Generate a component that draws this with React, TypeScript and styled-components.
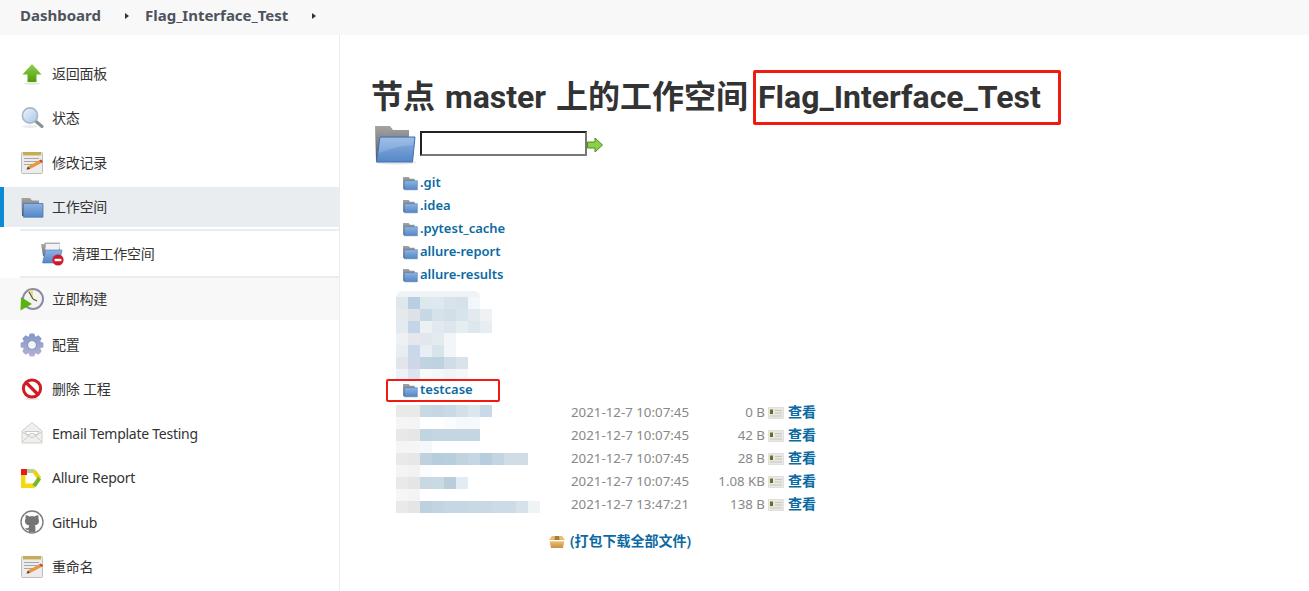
import React from "react";
import styled, { createGlobalStyle } from "styled-components";

const FONT = `"Noto Sans", "Noto Sans CJK SC", sans-serif`;

const GlobalStyle = createGlobalStyle`
  html, body {
    margin: 0;
    padding: 0;
    background: #fff;
    font-family: ${FONT};
    color: #333;
  }
  * { box-sizing: border-box; }
`;

const gearPath = (() => {
  const teeth = 8;
  const pts: string[] = [];
  for (let i = 0; i < teeth; i++) {
    const a = (i / teeth) * Math.PI * 2;
    const w = Math.PI / teeth;
    [
      [9, -w * 0.95],
      [11.6, -w * 0.5],
      [11.6, w * 0.5],
      [9, w * 0.95]
    ].forEach(([r, d]) => {
      pts.push(`${(12 + r * Math.cos(a + d)).toFixed(2)} ${(12 + r * Math.sin(a + d)).toFixed(2)}`);
    });
  }
  return `M${pts.join("L")}Z`;
})();

const Defs = () => (
  <HiddenSvg aria-hidden="true">
    <defs>
      <linearGradient id="folderFront" x1="0" y1="0" x2="0" y2="1">
        <stop offset="0" stopColor="#8db3e2" />
        <stop offset="1" stopColor="#5586c6" />
      </linearGradient>
      <linearGradient id="folderBack" x1="0" y1="0" x2="0" y2="1">
        <stop offset="0" stopColor="#a5a5a5" />
        <stop offset="1" stopColor="#555" />
      </linearGradient>
      <linearGradient id="greenUp" x1="0" y1="0" x2="0" y2="1">
        <stop offset="0" stopColor="#93cf4e" />
        <stop offset="1" stopColor="#4f9d0b" />
      </linearGradient>
      <linearGradient id="lens" x1="0" y1="0" x2="1" y2="1">
        <stop offset="0" stopColor="#eef5fc" />
        <stop offset="1" stopColor="#a8c6e8" />
      </linearGradient>
      <linearGradient id="gear" x1="0" y1="0" x2="0" y2="1">
        <stop offset="0" stopColor="#8199c4" />
        <stop offset="1" stopColor="#b4b0d6" />
      </linearGradient>
      <linearGradient id="box" x1="0" y1="0" x2="0" y2="1">
        <stop offset="0" stopColor="#eec27a" />
        <stop offset="1" stopColor="#c98f3c" />
      </linearGradient>
    </defs>
  </HiddenSvg>
);

type IconProps = { size?: number };

const UpIcon = ({ size = 24 }: IconProps) => (
  <svg width={size} height={size} viewBox="0 0 24 24">
    <ellipse cx="12" cy="21.5" rx="9" ry="1.2" fill="#e4e4e4" />
    <path d="M12 2 L21.5 12.5 H16.5 V20 H7.5 V12.5 H2.5 Z" fill="url(#greenUp)" />
  </svg>
);

const SearchIcon = ({ size = 24 }: IconProps) => (
  <svg width={size} height={size} viewBox="0 0 24 24">
    <ellipse cx="10" cy="20.5" rx="8" ry="1.4" fill="#ececec" />
    <line x1="15.5" y1="15" x2="22" y2="20.5" stroke="#8b8f94" strokeWidth="3" strokeLinecap="round" />
    <circle cx="10" cy="9.5" r="7.6" fill="url(#lens)" stroke="#a9b8c8" strokeWidth="1.6" />
  </svg>
);

const NotepadIcon = ({ size = 24 }: IconProps) => (
  <svg width={size} height={size} viewBox="0 0 24 24">
    <rect x="1.5" y="1.5" width="21" height="21" rx="1" fill="#ececec" stroke="#bdbdbd" />
    <rect x="3" y="1" width="18" height="3.4" fill="#c4ad55" />
    <path d="M4 7.5H19M4 10.5H19M4 13.5H13" stroke="#a8a8a8" strokeWidth="1" />
    <path d="M6.5 18.5 L8 15.5 L19 9.5 L21.5 12 L10 18 Z" fill="#e8973a" />
    <path d="M19 9.5 L21.5 12 L23 10.6 L21 8.4 Z" fill="#c8442e" />
    <path d="M6.5 18.5 L8 15.5 L10 18 Z" fill="#5a4330" />
  </svg>
);

const FolderIcon = ({ size = 24 }: IconProps) => (
  <svg width={size} height={size} viewBox="0 0 24 24">
    <path d="M1.5 3 H10 L12 5.5 H19 V21 H2 Z" fill="url(#folderBack)" />
    <path d="M3.4 8.5 H23 V22.2 H3.4 Z" fill="url(#folderFront)" stroke="#4a78b8" strokeWidth="0.8" />
  </svg>
);

const BigFolderIcon = () => (
  <svg width="44" height="40" viewBox="0 0 44 40">
    <ellipse cx="22" cy="37.5" rx="20" ry="2" fill="#e6e6e6" />
    <path d="M1 1 H16 L19 5 H35 V36 H2 Z" fill="url(#folderBack)" />
    <path d="M6 12 H41 L38.5 37 H2.5 Z" fill="url(#folderFront)" stroke="#3f70b4" strokeWidth="1" />
    <path d="M6 13 H40 L39.2 20 C28 20 16 24 4.6 28 Z" fill="#fff" opacity="0.16" />
  </svg>
);

const CleanIcon = ({ size = 24 }: IconProps) => (
  <svg width={size} height={size} viewBox="0 0 24 24">
    <path d="M1 2 H4 L5 0.5 H20 V14 H3 Z" fill="url(#folderBack)" opacity="0.85" />
    <path d="M6 2 H20 L19 10 H5 Z" fill="#f2f2f2" />
    <path d="M5.5 8 H22 L19.5 21 H2.5 Z" fill="url(#folderFront)" stroke="#4a78b8" strokeWidth="0.6" />
    <circle cx="18" cy="18" r="5.6" fill="#cf1b28" />
    <rect x="14.6" y="16.8" width="6.8" height="2.4" fill="#fff" />
  </svg>
);

const BuildIcon = ({ size = 24 }: IconProps) => (
  <svg width={size} height={size} viewBox="0 0 24 24">
    <circle cx="13" cy="12" r="10" fill="#f4f4ee" stroke="#8e8aa8" strokeWidth="2" />
    <path d="M13 12 L8 4 A10 10 0 0 1 13 3 Z" fill="#ecdc7a" />
    <path d="M13 12 L9 5 M13 12 L17 14" stroke="#555" strokeWidth="1.2" />
    <path d="M1 10 L12 17 L0.5 23.5 Z" fill="#5bb312" />
  </svg>
);

const GearIcon = ({ size = 24 }: IconProps) => (
  <svg width={size} height={size} viewBox="0 0 24 24">
    <path d={gearPath} fill="url(#gear)" />
    <circle cx="12" cy="12" r="4.4" fill="#f3f4f9" stroke="#6f86b5" strokeWidth="0.8" />
  </svg>
);

const DeleteIcon = ({ size = 24 }: IconProps) => (
  <svg width={size} height={size} viewBox="0 0 24 24">
    <ellipse cx="12" cy="22" rx="8" ry="1.2" fill="#e6e6e6" />
    <circle cx="12" cy="11.5" r="8.6" fill="#fff" stroke="#d01c22" strokeWidth="3" />
    <line x1="6" y1="5.5" x2="18" y2="17.5" stroke="#d01c22" strokeWidth="3.2" />
  </svg>
);

const MailIcon = ({ size = 24 }: IconProps) => (
  <svg width={size} height={size} viewBox="0 0 24 24">
    <path d="M2 10 L12 1.5 L22 10 V22 H2 Z" fill="#f0f0ee" stroke="#cfcfcb" />
    <path d="M5 10.5 H19 L17 14 L12 12.5 L7 14 Z" fill="#fff" stroke="#bdbdb8" strokeWidth="0.8" />
    <path d="M2 21 L9 14.5 M22 21 L15 14.5 M2.4 11 L12 17 L21.6 11" fill="none" stroke="#c6c6c2" strokeWidth="0.9" />
  </svg>
);

const AllureIcon = ({ size = 24 }: IconProps) => (
  <svg width={size} height={size} viewBox="0 0 24 24">
    <path d="M3.2 5 V19.8 H14.5" fill="none" stroke="#f4d90f" strokeWidth="4.4" />
    <path d="M1 3 H7 V9 H1 Z" fill="#e31b1b" />
    <path d="M7 5 H14.5" fill="none" stroke="#a9d69a" strokeWidth="4" />
    <path d="M14 5 L19.5 12.5" fill="none" stroke="#f2cc1d" strokeWidth="4" />
    <path d="M19.5 12 L14 20" fill="none" stroke="#76b82a" strokeWidth="4" />
  </svg>
);

const GithubIcon = ({ size = 24 }: IconProps) => (
  <svg width={size} height={size} viewBox="0 0 24 24">
    <circle cx="12" cy="12" r="11" fill="#fff" stroke="#7d7d7d" strokeWidth="1.4" />
    <path
      d="M5.8 5.2 C7 5 8.4 5.7 9.3 6.5 C11 6 13 6 14.7 6.5 C15.6 5.7 17 5 18.2 5.2 C18.6 6.4 18.6 7.6 18.3 8.4 C19.2 9.6 19.3 12 18.4 13.4 C17.4 14.8 15.8 15.2 14.6 15.3 C15.2 16 15.4 16.8 15.4 18 V22 H8.6 V19.8 C6.6 20.2 5.6 19.4 5 18 C6.2 18.6 7.6 18.4 8.8 17.4 C8.8 16.4 9 15.8 9.4 15.3 C8.2 15.2 6.6 14.8 5.6 13.4 C4.7 12 4.8 9.6 5.7 8.4 C5.4 7.6 5.4 6.4 5.8 5.2 Z"
      fill="#757575"
    />
  </svg>
);

const GoArrow = () => (
  <svg width="16" height="16" viewBox="0 0 16 16">
    <path d="M0.5 5 H8 V1 L15.5 8 L8 15 V11 H0.5 Z" fill="#8ccf4a" stroke="#4b8f16" strokeWidth="1" />
  </svg>
);

const ViewIcon = () => (
  <svg width="16" height="12" viewBox="0 0 16 12">
    <rect x="0" y="0.5" width="16" height="11" rx="1" fill="#e9e8e2" stroke="#d2d2cc" strokeWidth="0.6" />
    <rect x="2" y="2.5" width="3" height="4.5" fill="#7a6a24" />
    <rect x="2.6" y="4.6" width="1.8" height="2.4" fill="#3e7a22" />
    <path d="M7 3.5H14M7 6H14M2 9H14" stroke="#c2c2ba" strokeWidth="0.9" />
  </svg>
);

const BoxIcon = () => (
  <svg width="16" height="14" viewBox="0 0 16 14">
    <path d="M3 1 H13 L16 5 H0 Z" fill="#e8bd78" />
    <path d="M6 1 H10 L10.6 5 H5.4 Z" fill="#a87c3c" />
    <path d="M0.6 6 H15.4 L14 13 H2 Z" fill="url(#box)" />
    <rect x="0" y="5" width="16" height="1.6" fill="#fff" opacity="0.5" />
  </svg>
);

type Task = { label: string; icon: React.ReactNode; latin?: boolean };

const topTasks: Task[] = [
  { label: "返回面板", icon: <UpIcon /> },
  { label: "状态", icon: <SearchIcon /> },
  { label: "修改记录", icon: <NotepadIcon /> }
];

const bottomTasks: Task[] = [
  { label: "配置", icon: <GearIcon /> },
  { label: "删除 工程", icon: <DeleteIcon /> },
  { label: "Email Template Testing", icon: <MailIcon />, latin: true },
  { label: "Allure Report", icon: <AllureIcon />, latin: true },
  { label: "GitHub", icon: <GithubIcon />, latin: true },
  { label: "重命名", icon: <NotepadIcon /> }
];

const topDirs = [".git", ".idea", ".pytest_cache", "allure-report", "allure-results"];

const files = [
  { date: "2021-12-7 10:07:45", size: "0 B" },
  { date: "2021-12-7 10:07:45", size: "42 B" },
  { date: "2021-12-7 10:07:45", size: "28 B" },
  { date: "2021-12-7 10:07:45", size: "1.08 KB" },
  { date: "2021-12-7 13:47:21", size: "138 B" }
];

// redacted names in the screenshot, one array per 12px row of tiles
const dirTiles = [
  ["#dfe7ee", "#b9cde3", "#dce7ee", "#dfe8ee", "#d8e4ec", "#d5e2ea", "#f4f7f9"],
  ["#e6e8ec", "#dde2e8", "#c6d8e3", "#d5e2ea", "#d3dee6", "#d8e4ec", "#e2eaf0", "#eef2f5"],
  ["#e3eaf0", "#c5d5e8", "#ebf0f3", "#e0eaef", "#dde6ec", "#e6edf1", "#dde7ee", "#e8edf1"],
  ["#eef1f3", "#e4e8ec", "#e1e7ec", "#e4ebef", "#f3f6f8"],
  ["#e8edf2", "#c9d8ea", "#e8eff4", "#d7e4ea", "#f3f6f8"],
  ["#e2e5ea", "#cdd7e5", "#c0d3e0", "#bfd2df", "#d0dde6", "#d8e4ea"],
  ["#eef1f5", "#dbe5f0", "#f7f9fb", "#f5f8fa", "#f2f5f7", "#f5f8f9"]
];

const fileTiles = [
  ["#e9e9e9", "#e9e9e9", "#c9d9e4", "#c6d7e3", "#c9d9e5", "#d3e0e9", "#dce6ed", "#c9dae6"],
  ["#f5f5f5", "#f4f4f4", "#fff", "#fff", "#fbfcfd", "#f6f9fb", "#f6f9fb"],
  ["#e8e8e8", "#e6e6e6", "#c0d4e1", "#c4d6e2", "#c4d6e2", "#c4d6e2", "#c4d6e2"],
  ["#f5f5f5", "#f5f5f5", "#f5f8fa"],
  ["#e9e9e9", "#e7e7e7", "#bdd1df", "#b6cddc", "#b8cedd", "#c2d3e0", "#c6d6e2", "#b5cddc", "#c4d5e1", "#d0dde7", "#d0dde7"],
  ["#f4f4f4", "#f2f2f2", "#fbfcfd"],
  ["#e9e9e9", "#e5e5e5", "#c9d9e4", "#c9dae5", "#b9cddb", "#e3ecf2"],
  ["#f6f6f6", "#f4f4f4"],
  ["#e9e9e9", "#e5e5e5", "#bdd1df", "#c2d4e1", "#c6d6e2", "#c6d6e2", "#c9d9e4", "#c9d9e4", "#ccdbe6", "#ccdbe6", "#d5e2ea", "#eef3f6"]
];

const MosaicBlock = ({ rows }: { rows: string[][] }) => (
  <Mosaic>
    {rows.map((row, i) => (
      <MosaicRow key={i}>
        {row.map((c, j) => (
          <Tile key={j} style={{ background: c }} />
        ))}
      </MosaicRow>
    ))}
  </Mosaic>
);

export default function App() {
  return (
    <Page>
      <GlobalStyle />
      <Defs />
      <Breadcrumbs>
        <Crumb>Dashboard</Crumb>
        <CrumbArrow />
        <Crumb>Flag_Interface_Test</Crumb>
        <CrumbArrow />
      </Breadcrumbs>
      <Body>
        <Sidebar>
          {topTasks.map((t) => (
            <TaskRow key={t.label}>
              <TaskIcon>{t.icon}</TaskIcon>
              <TaskLabel>{t.label}</TaskLabel>
            </TaskRow>
          ))}
          <ActiveTask>
            <TaskIcon>
              <FolderIcon />
            </TaskIcon>
            <TaskLabel>工作空间</TaskLabel>
          </ActiveTask>
          <SubTasks>
            <TaskIcon>
              <CleanIcon />
            </TaskIcon>
            <TaskLabel>清理工作空间</TaskLabel>
          </SubTasks>
          <BuildTask>
            <TaskIcon>
              <BuildIcon />
            </TaskIcon>
            <TaskLabel>立即构建</TaskLabel>
          </BuildTask>
          {bottomTasks.map((t) => (
            <TaskRow key={t.label}>
              <TaskIcon>{t.icon}</TaskIcon>
              <TaskLabel $latin={t.latin}>{t.label}</TaskLabel>
            </TaskRow>
          ))}
        </Sidebar>
        <Main>
          <Heading>
            节点 master 上的工作空间 <Marked>Flag_Interface_Test</Marked>
          </Heading>
          <PathBar>
            <BigFolderIcon />
            <PathInput />
            <GoArrow />
          </PathBar>
          <DirList>
            {topDirs.map((d) => (
              <DirRow key={d}>
                <FolderIcon size={16} />
                <DirLink>{d}</DirLink>
              </DirRow>
            ))}
          </DirList>
          <DirMosaic>
            <MosaicCap />
            <MosaicBlock rows={dirTiles} />
          </DirMosaic>
          <DirRow>
            <TestcaseMark />
            <FolderIcon size={16} />
            <DirLink>testcase</DirLink>
          </DirRow>
          <FileBlock>
            <FileMosaic>
              <MosaicBlock rows={fileTiles} />
            </FileMosaic>
            <FileRows>
              {files.map((f, i) => (
                <FileRow key={i}>
                  <FileDate>{f.date}</FileDate>
                  <FileSize>{f.size}</FileSize>
                  <ViewIcon />
                  <CjkLink>查看</CjkLink>
                </FileRow>
              ))}
            </FileRows>
          </FileBlock>
          <ArchiveRow>
            <BoxIcon />
            <CjkLink>(打包下载全部文件)</CjkLink>
          </ArchiveRow>
        </Main>
      </Body>
    </Page>
  );
}

const HiddenSvg = styled.svg`
  position: absolute;
  width: 0;
  height: 0;
`;

const Page = styled.div`
  width: 1309px;
  height: 591px;
  overflow: hidden;
`;

const Breadcrumbs = styled.nav`
  display: flex;
  align-items: center;
  height: 35px;
  padding: 0 0 6px 20px;
  background: #f8f8f8;
`;

const Crumb = styled.span`
  font-size: 15px;
  font-weight: 700;
  color: #4d545d;
`;

const CrumbArrow = styled.span`
  width: 0;
  height: 0;
  margin: 2px 16px 0 24px;
  border-left: 4px solid #333;
  border-top: 3.5px solid transparent;
  border-bottom: 3.5px solid transparent;
`;

const Body = styled.div`
  display: flex;
  height: 556px;
`;

const Sidebar = styled.aside`
  width: 340px;
  flex: none;
  padding-top: 19px;
  border-right: 1px solid #e9edf0;
  color: #333;
`;

const TaskIcon = styled.span`
  display: flex;
  flex: none;
  width: 24px;
  height: 24px;
  margin-right: 8px;
`;

const TaskLabel = styled.span<{ $latin?: boolean }>`
  margin-bottom: ${(p) => (p.$latin ? "0" : "2px")};
  font-size: 14px;
  letter-spacing: -0.25px;
`;

const TaskRow = styled.div`
  display: flex;
  align-items: center;
  height: 40px;
  margin-bottom: 4.4px;
  padding-left: 20px;
`;

const ActiveTask = styled(TaskRow)`
  margin-bottom: 2px;
  padding-left: 16px;
  border-left: 4px solid #0b8bd6;
  background: #e9edf0;
`;

const SubTasks = styled(TaskRow)`
  height: 49px;
  margin: 0 0 0 20px;
  border-top: 2px solid #e9edf0;
  border-bottom: 2px solid #e9edf0;
`;

const BuildTask = styled(TaskRow)`
  height: 42px;
  background: #f8f8f8;
`;

const Main = styled.main`
  flex: 1;
  padding: 38px 0 0 33px;
`;

const Heading = styled.h1`
  margin: 0 0 0 -2px;
  font-family: Roboto, "Noto Sans CJK SC", sans-serif;
  font-size: 32px;
  font-weight: 700;
  line-height: 48px;
  word-spacing: 2px;
  color: #333;
  white-space: nowrap;
`;

const Marked = styled.span`
  position: relative;

  &::after {
    content: "";
    position: absolute;
    left: -5px;
    right: -20px;
    top: -8px;
    height: 49px;
    border: 3px solid #f01a10;
    border-radius: 2px;
  }
`;

const PathBar = styled.div`
  display: flex;
  align-items: center;
  height: 40px;
  margin-top: 4px;
  padding-left: 1px;
`;

const PathInput = styled.input`
  width: 167px;
  height: 25px;
  margin: 0 0 4px 2px;
  padding: 0;
  background: #fff;
  border-width: 2px;
  border-style: solid;
  border-color: #222 #777 #777 #222;
`;

const DirList = styled.div`
  margin-top: 6px;
`;

const DirRow = styled.div`
  position: relative;
  display: flex;
  align-items: center;
  gap: 2px;
  height: 23px;
  padding-left: 29px;
`;

const DirLink = styled.a`
  margin-bottom: 2px;
  font-size: 13px;
  font-weight: 600;
  color: #0b6aa2;
`;

const CjkLink = styled(DirLink)`
  margin-bottom: 4px;
  font-size: 14px;
`;

const Mosaic = styled.div`
  display: flex;
  flex-direction: column;
`;

const MosaicRow = styled.div`
  display: flex;
  height: 12px;
`;

const Tile = styled.span`
  width: 12px;
  height: 12px;
`;

const MosaicCap = styled.div`
  width: 84px;
  height: 6px;
  background: #f0f3f6;
  border-radius: 8px 8px 0 0;
`;

const DirMosaic = styled.div`
  margin: 5px 0 -3px 23px;
`;

const TestcaseMark = styled.span`
  position: absolute;
  left: 13px;
  top: 1px;
  width: 114px;
  height: 23px;
  border: 2.5px solid #f01a10;
  border-radius: 2px;
`;

const FileBlock = styled.div`
  display: flex;
  margin-left: 23px;
`;

const FileMosaic = styled.div`
  flex: none;
  width: 175px;
  padding-top: 4px;
`;

const FileRows = styled.div`
  display: flex;
  flex-direction: column;
`;

const FileRow = styled.div`
  display: grid;
  grid-template-columns: 125px 72px 20px auto;
  align-items: center;
  height: 23px;
`;

const FileDate = styled.span`
  margin-bottom: 2px;
  font-size: 13.3px;
  color: #888;
  white-space: nowrap;
`;

const FileSize = styled(FileDate)`
  padding-right: 3px;
  text-align: right;
`;

const ArchiveRow = styled.div`
  display: flex;
  align-items: center;
  gap: 5px;
  height: 24px;
  margin-top: 14px;
  padding-left: 176px;
`;
